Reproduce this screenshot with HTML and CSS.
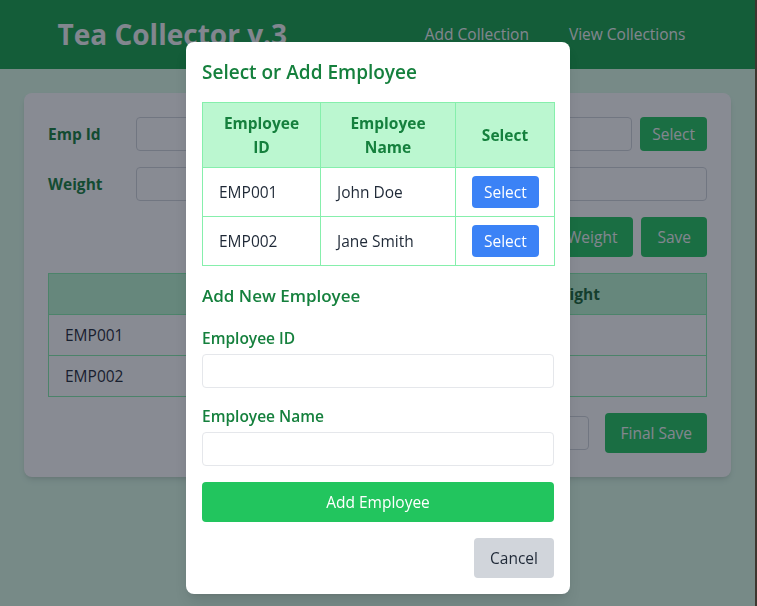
FILE: index.html
```html
<!DOCTYPE html>
<html lang="en">
<head>
<meta charset="utf-8">
<title>Tea Collector v.3</title>
<link rel="stylesheet" href="styles.css">
</head>
<body>
<div class="page">
  <header class="topbar">
    <div class="container topbar-inner">
      <h1 class="brand">Tea Collector v.3</h1>
      <nav class="nav">
        <a class="nav-link" href="#">Add Collection</a>
        <a class="nav-link" href="#">View Collections</a>
      </nav>
    </div>
  </header>

  <main class="main">
    <section class="card">
      <div class="form-row">
        <label class="field-label">Emp Id</label>
        <input class="input grow" type="text">
        <button class="btn btn-green btn-sm">Select</button>
      </div>
      <div class="form-row">
        <label class="field-label">Weight</label>
        <input class="input grow" type="text">
      </div>
      <div class="actions">
        <button class="btn btn-green">Add Weight</button>
        <button class="btn btn-green">Save</button>
      </div>
      <table class="data-table">
        <thead>
          <tr><th class="col-id">Emp ID</th><th>Weight</th></tr>
        </thead>
        <tbody>
          <tr><td>EMP001</td><td>12.5</td></tr>
          <tr><td>EMP002</td><td>10.0</td></tr>
        </tbody>
      </table>
      <div class="actions final-row">
        <input class="input total" type="text">
        <button class="btn btn-green btn-final">Final Save</button>
      </div>
    </section>
  </main>
</div>

<div class="overlay">
  <div class="modal">
    <h2 class="modal-title">Select or Add Employee</h2>
    <table class="emp-table">
      <colgroup>
        <col class="c1"><col class="c2"><col class="c3">
      </colgroup>
      <thead>
        <tr><th>Employee ID</th><th>Employee Name</th><th>Select</th></tr>
      </thead>
      <tbody>
        <tr><td>EMP001</td><td>John Doe</td><td class="center"><button class="btn btn-blue">Select</button></td></tr>
        <tr><td>EMP002</td><td>Jane Smith</td><td class="center"><button class="btn btn-blue">Select</button></td></tr>
      </tbody>
    </table>
    <h3 class="section-title">Add New Employee</h3>
    <label class="modal-label">Employee ID</label>
    <input class="input modal-input" type="text">
    <label class="modal-label">Employee Name</label>
    <input class="input modal-input" type="text">
    <button class="btn btn-add">Add Employee</button>
    <div class="modal-footer">
      <button class="btn btn-gray">Cancel</button>
    </div>
  </div>
</div>
</body>
</html>
```

FILE: styles.css
```css
* { box-sizing: border-box; }

html {
  background: #6a5436;
  height: 100%;
}

body {
  margin: 0 2px 0 0;
  min-height: 100%;
  background: #dcfce7;
  font-family: "Open Sans", "Noto Sans", sans-serif;
  font-size: 15.5px;
  line-height: 24px;
  color: #1f2937;
}

.page { min-height: 606px; }

/* Header */
.topbar {
  background: #16a34a;
  padding: 16px 0 17px;
}
.container {
  width: 640px;
  margin: 0 auto;
}
.topbar-inner {
  display: flex;
  align-items: center;
  justify-content: space-between;
}
.brand {
  margin: 0;
  font-size: 28px;
  line-height: 36px;
  font-weight: 700;
  color: #f3f4f6;
}
.nav {
  display: flex;
  gap: 16px;
}
.nav-link {
  color: #f3f4f6;
  text-decoration: none;
  padding: 0 12px;
}

/* Main card */
.main { padding: 24px; }
.card {
  background: #fff;
  border-radius: 8px;
  padding: 24px;
  box-shadow: 0 4px 6px -1px rgba(0,0,0,.1), 0 2px 4px -2px rgba(0,0,0,.1);
}
.form-row {
  display: flex;
  align-items: center;
  gap: 8px;
  margin-bottom: 16px;
}
.field-label {
  width: 80px;
  font-weight: 700;
  color: #15803d;
}
.input {
  height: 34px;
  border: 1px solid #d1d5db;
  border-radius: 4px;
  padding: 4px 8px;
  font: inherit;
  background: #fff;
}
.grow { flex: 1; }

.btn {
  font: inherit;
  border: 0;
  border-radius: 4px;
  padding: 8px 16px;
  line-height: 24px;
  cursor: pointer;
}
.btn-green { background: #22c55e; color: #f3f4f6; }
.btn-sm { padding: 5px 12px; line-height: 24px; }
.btn-final { padding: 8px 15px; }

.actions {
  display: flex;
  justify-content: flex-end;
  align-items: center;
  gap: 8px;
}
.final-row { gap: 16px; margin-top: 16px; }
.total { width: 200px; }

.data-table {
  width: 100%;
  margin-top: 16px;
  border-collapse: collapse;
  border: 1px solid #86efac;
}
.data-table th,
.data-table td {
  border: 1px solid #86efac;
  padding: 8px 16px;
  text-align: left;
}
.data-table th {
  background: #bbf7d0;
  color: #166534;
  text-align: center;
  font-weight: 700;
}
.data-table .col-id { width: 59.3%; }

/* Modal */
.overlay {
  position: fixed;
  inset: 0;
  background: rgba(17, 24, 39, .5);
  display: flex;
  justify-content: center;
  align-items: flex-start;
  padding: 42px 1px 0 0;
}
.modal {
  width: 384px;
  background: #fff;
  border-radius: 8px;
  padding: 16px;
  box-shadow: 0 10px 15px -3px rgba(0,0,0,.1), 0 4px 6px -4px rgba(0,0,0,.1);
}
.modal-title {
  margin: 0 0 16px;
  font-size: 19px;
  line-height: 28px;
  font-weight: 600;
  color: #15803d;
}
.emp-table {
  width: 100%;
  border-collapse: collapse;
  table-layout: fixed;
}
.emp-table .c1 { width: 118px; }
.emp-table .c2 { width: 135px; }
.emp-table .c3 { width: 99px; }
.emp-table th,
.emp-table td {
  border: 1px solid #86efac;
  padding: 8px 16px;
}
.emp-table th {
  background: #bbf7d0;
  color: #15803d;
  font-weight: 700;
  text-align: center;
}
.emp-table td { color: #1f2937; }
.emp-table td.center { text-align: center; }
.btn-blue {
  background: #3b82f6;
  color: #fff;
  padding: 4px 12px;
}

.section-title {
  margin: 16px 0 16px;
  font-size: 17px;
  line-height: 28px;
  font-weight: 600;
  color: #15803d;
}
.modal-label {
  display: block;
  font-weight: 600;
  color: #15803d;
  margin-bottom: 4px;
}
.modal-input {
  display: block;
  width: 100%;
  border-color: #e5e7eb;
  margin-bottom: 16px;
}
.btn-add {
  display: block;
  width: 100%;
  background: #22c55e;
  color: #fff;
}
.modal-footer {
  display: flex;
  justify-content: flex-end;
  margin-top: 16px;
}
.btn-gray {
  background: #d1d5db;
  color: #1f2937;
}
```
